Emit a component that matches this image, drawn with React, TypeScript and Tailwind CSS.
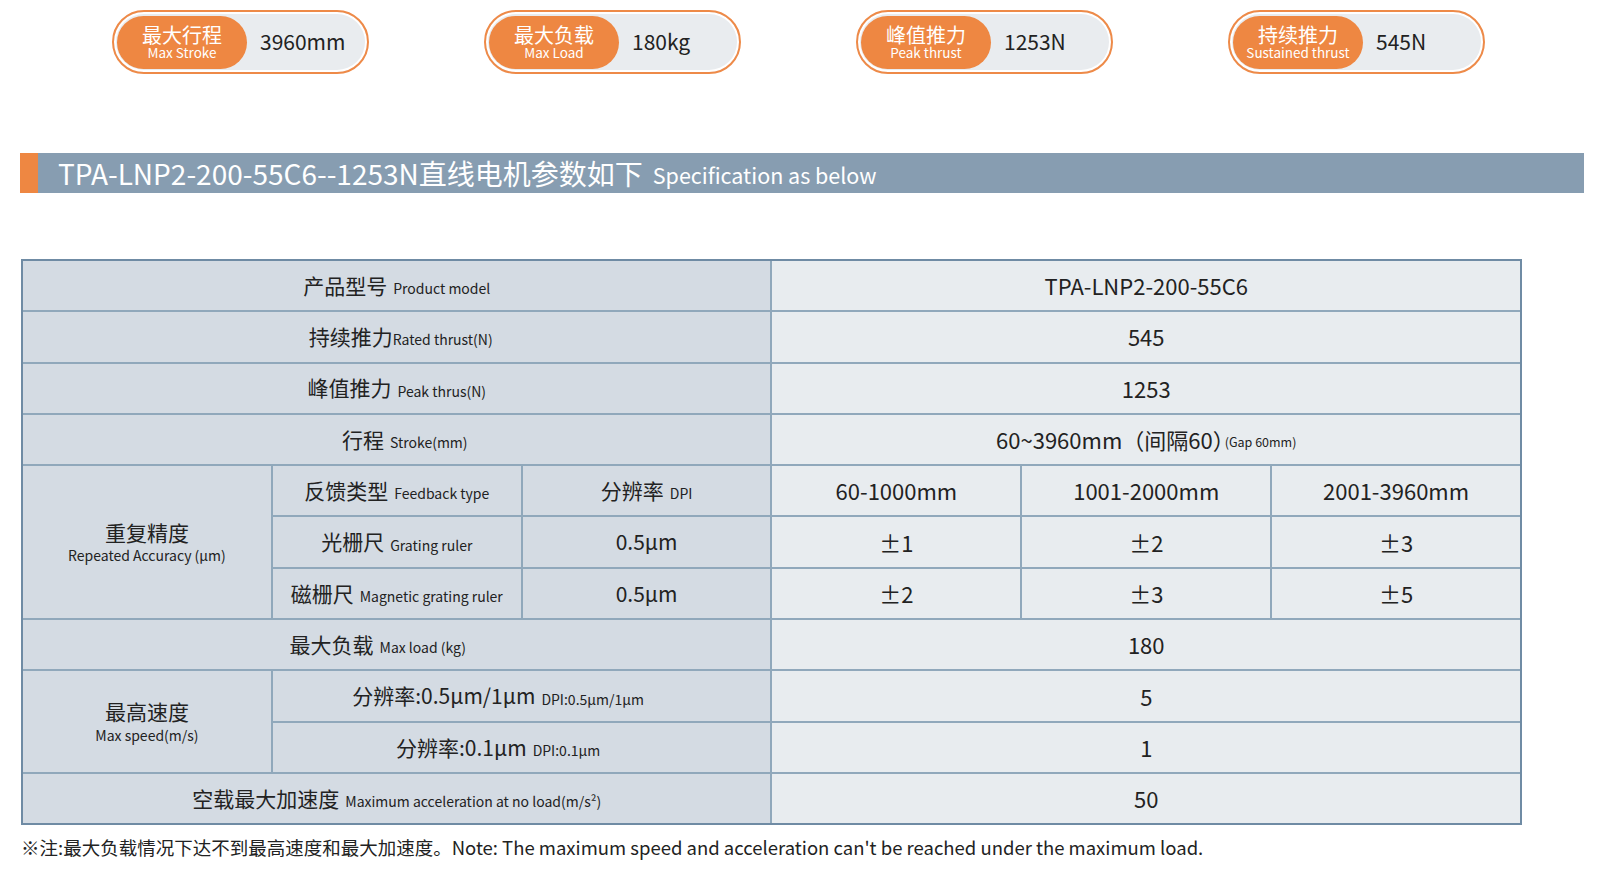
import React from "react";

const font = { fontFamily: '"Noto Sans CJK SC", "Noto Sans", sans-serif' };

const stats = [
  { cn: "最大行程", en: "Max Stroke", value: "3960mm" },
  { cn: "最大负载", en: "Max Load", value: "180kg" },
  { cn: "峰值推力", en: "Peak thrust", value: "1253N" },
  { cn: "持续推力", en: "Sustained thrust", value: "545N" },
];

const StatPill = ({ cn, en, value }: { cn: string; en: string; value: string }) => (
  <div className="flex h-[64px] w-[257px] items-center rounded-full border-2 border-[#ee8a48] bg-[#e9ecef] p-[3px] shadow-[inset_0_0_0_2px_#ffffff]">
    <div className="flex h-[53px] w-[130px] flex-col items-center justify-center rounded-full bg-[#ee8742] text-white">
      <span className="text-[20px] leading-[21px]">{cn}</span>
      <span className="text-[13.5px] leading-[15px]">{en}</span>
    </div>
    <span className="ml-[13px] text-[21px] text-[#222]">{value}</span>
  </div>
);

const Label = ({
  cn,
  en,
  tight = false,
  className = "",
}: {
  cn: string;
  en?: string;
  tight?: boolean;
  className?: string;
}) => (
  <div className={`flex items-center justify-center bg-[#d4dbe3] text-[#222] ${className}`}>
    <span className="text-[21px]">{cn}</span>
    {en && <span className={`${tight ? "ml-0" : "ml-[6px]"} mt-[6px] text-[14px]`}>{en}</span>}
  </div>
);

const Value = ({ children, className = "" }: { children: React.ReactNode; className?: string }) => (
  <div className={`flex items-center justify-center bg-[#e8ecef] text-[22px] text-[#222] ${className}`}>
    {children}
  </div>
);

export default function App() {
  return (
    <div className="h-[883px] w-[1600px] overflow-hidden bg-white" style={font}>
      {/* Summary pills */}
      <div className="flex gap-[115px] pl-[112px] pt-[10px]">
        {stats.map((s) => (
          <StatPill key={s.cn} {...s} />
        ))}
      </div>

      {/* Section title */}
      <div className="ml-[20px] mt-[79px] flex h-[40px] w-[1564px] items-center bg-[#879db1]">
        <div className="h-full w-[18px] bg-[#ee8742]" />
        <span className="ml-[20px] text-[28px] text-white">TPA-LNP2-200-55C6--1253N直线电机参数如下</span>
        <span className="ml-[10px] mt-[4px] text-[21.5px] text-white">Specification as below</span>
      </div>

      {/* Spec table */}
      <div className="ml-[21px] mt-[66px] grid w-[1501px] grid-cols-6 auto-rows-[49.3px] gap-[2px] border-2 border-[#6f8ba4] bg-[#90a8bb]">
        <Label className="col-span-3" cn="产品型号" en="Product model" />
        <Value className="col-span-3">TPA-LNP2-200-55C6</Value>

        <Label className="col-span-3 pl-[8px]" cn="持续推力" en="Rated thrust(N)" tight />
        <Value className="col-span-3">545</Value>

        <Label className="col-span-3" cn="峰值推力" en="Peak thrus(N)" />
        <Value className="col-span-3">1253</Value>

        <Label className="col-span-3 pl-[16px]" cn="行程" en="Stroke(mm)" />
        <Value className="col-span-3">
          60~3960mm（间隔60）<span className="-ml-[10px] mt-[5px] text-[12.5px]">(Gap 60mm)</span>
        </Value>

        <div className="row-span-3 flex flex-col items-center justify-center bg-[#d4dbe3] text-[#222]">
          <span className="text-[21px] leading-[26px]">重复精度</span>
          <span className="text-[14px]">Repeated Accuracy (μm)</span>
        </div>
        <Label cn="反馈类型" en="Feedback type" />
        <Label cn="分辨率" en="DPI" />
        <Value>60-1000mm</Value>
        <Value>1001-2000mm</Value>
        <Value>2001-3960mm</Value>

        <Label cn="光栅尺" en="Grating ruler" />
        <Label cn="0.5μm" />
        <Value>±1</Value>
        <Value>±2</Value>
        <Value>±3</Value>

        <Label cn="磁栅尺" en="Magnetic grating ruler" />
        <Label cn="0.5μm" />
        <Value>±2</Value>
        <Value>±3</Value>
        <Value>±5</Value>

        <Label className="col-span-3 pr-[38px]" cn="最大负载" en="Max load (kg)" />
        <Value className="col-span-3">180</Value>

        <div className="row-span-2 flex flex-col items-center justify-center bg-[#d4dbe3] text-[#222]">
          <span className="text-[21px] leading-[28px]">最高速度</span>
          <span className="text-[14px]">Max speed(m/s)</span>
        </div>
        <Label className="col-span-2 pr-[47px]" cn="分辨率:0.5μm/1μm" en="DPI:0.5μm/1μm" />
        <Value className="col-span-3">5</Value>

        <Label className="col-span-2 pr-[47px]" cn="分辨率:0.1μm" en="DPI:0.1μm" />
        <Value className="col-span-3">1</Value>

        <Label className="col-span-3" cn="空载最大加速度" en="Maximum acceleration at no load(m/s²)" />
        <Value className="col-span-3">50</Value>
      </div>

      {/* Footnote */}
      <p className="ml-[21px] mt-[9px] text-[18.5px] text-[#222]">
        ※注:最大负载情况下达不到最高速度和最大加速度。Note: The maximum speed and acceleration can't be reached under the maximum load.
      </p>
    </div>
  );
}
